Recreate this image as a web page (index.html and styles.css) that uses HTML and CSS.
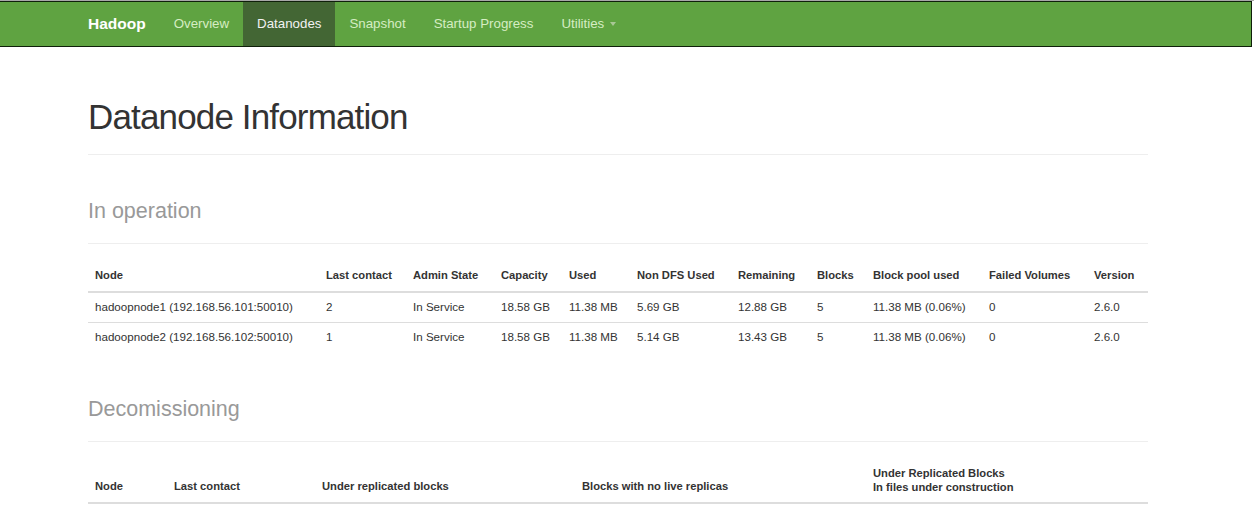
FILE: index.html
```html
<!DOCTYPE html>
<html>
<head>
<meta charset="utf-8">
<title>Datanode Information</title>
<link rel="stylesheet" href="styles.css">
</head>
<body>
<div class="topline"></div>
<nav class="navbar">
  <div class="nav-inner">
    <a class="brand">Hadoop</a>
    <ul class="nav">
      <li><a>Overview</a></li>
      <li class="active"><a>Datanodes</a></li>
      <li><a>Snapshot</a></li>
      <li><a>Startup Progress</a></li>
      <li><a>Utilities <span class="caret"></span></a></li>
    </ul>
  </div>
</nav>
<main class="container">
  <div class="page-header"><h1>Datanode Information</h1></div>

  <div class="section-header"><h2>In operation</h2></div>
  <table class="table">
    <colgroup>
      <col class="c231"><col class="c87"><col class="c88"><col class="c68"><col class="c68"><col class="c101"><col class="c79"><col class="c56"><col class="c116"><col class="c105"><col class="c61">
    </colgroup>
    <thead>
      <tr>
        <th>Node</th><th>Last contact</th><th>Admin State</th><th>Capacity</th><th>Used</th><th>Non DFS Used</th><th>Remaining</th><th>Blocks</th><th>Block pool used</th><th>Failed Volumes</th><th>Version</th>
      </tr>
    </thead>
    <tbody>
      <tr>
        <td>hadoopnode1 (192.168.56.101:50010)</td><td>2</td><td>In Service</td><td>18.58 GB</td><td>11.38 MB</td><td>5.69 GB</td><td>12.88 GB</td><td>5</td><td>11.38 MB (0.06%)</td><td>0</td><td>2.6.0</td>
      </tr>
      <tr>
        <td>hadoopnode2 (192.168.56.102:50010)</td><td>1</td><td>In Service</td><td>18.58 GB</td><td>11.38 MB</td><td>5.14 GB</td><td>13.43 GB</td><td>5</td><td>11.38 MB (0.06%)</td><td>0</td><td>2.6.0</td>
      </tr>
    </tbody>
  </table>

  <div class="section-header second"><h2>Decomissioning</h2></div>
  <table class="table decom">
    <colgroup>
      <col class="c79"><col class="c148"><col class="c260"><col class="c291"><col class="c282">
    </colgroup>
    <thead>
      <tr>
        <th>Node</th><th>Last contact</th><th>Under replicated blocks</th><th>Blocks with no live replicas</th><th class="two-line">Under Replicated Blocks<br>In files under construction</th>
      </tr>
    </thead>
  </table>
</main>
</body>
</html>
```

FILE: styles.css
```css
html, body {
  margin: 0;
  padding: 0;
  background: #ffffff;
}

body {
  font-family: "Liberation Sans", Arial, Helvetica, sans-serif;
  color: #333333;
}

.topline {
  height: 1px;
  background: #a8a8a8;
}

.navbar {
  height: 44px;
  background: #5fa341;
  border-top: 1px solid #0f1f0a;
  border-bottom: 1px solid #0f1f0a;
  border-right: 1px solid #0f1f0a;
  margin-right: 2px;
}

.nav-inner {
  display: flex;
  height: 44px;
  padding-left: 88px;
}

.brand {
  display: block;
  font-size: 15.5px;
  font-weight: bold;
  line-height: 44px;
  color: #ffffff;
  padding-right: 14px;
}

.nav {
  display: flex;
  list-style: none;
  margin: 0;
  padding: 0;
}

.nav a {
  display: block;
  padding: 0 14px;
  line-height: 44px;
  font-size: 13.3px;
  color: #d6edc3;
}

.nav .active a {
  background: #436634;
  color: #f2f2f2;
}

.caret {
  display: inline-block;
  width: 0;
  height: 0;
  margin-left: 2px;
  vertical-align: middle;
  border-top: 4px solid #a9c796;
  border-left: 3.5px solid transparent;
  border-right: 3.5px solid transparent;
}

.container {
  margin-left: 88px;
  width: 1060px;
}

.page-header {
  margin-top: 50px;
  padding-bottom: 17px;
  border-bottom: 1px solid #eeeeee;
}

h1 {
  margin: 0;
  font-size: 35px;
  line-height: 40px;
  font-weight: normal;
  letter-spacing: -0.85px;
  color: #333333;
}

.section-header {
  margin-top: 44px;
  padding-bottom: 20px;
  border-bottom: 1px solid #eeeeee;
}

.section-header.second {
  margin-top: 45px;
}

h2 {
  margin: 0;
  font-size: 21.5px;
  line-height: 24px;
  font-weight: normal;
  color: #999999;
}

.table {
  width: 1060px;
  table-layout: fixed;
  border-collapse: collapse;
  margin-top: 18px;
  font-size: 11.6px;
}

.table.decom {
  margin-top: 19px;
}

.table th,
.table td {
  padding: 6px 7px 8px;
  line-height: 15px;
  text-align: left;
  vertical-align: top;
  white-space: nowrap;
}

.table th {
  font-size: 11.2px;
  font-weight: bold;
  vertical-align: bottom;
  border-bottom: 2px solid #dddddd;
}

.table td {
  border-top: 1px solid #dddddd;
}

.table th.two-line {
  line-height: 13.5px;
}

.c231 { width: 231px; }
.c87 { width: 87px; }
.c88 { width: 88px; }
.c68 { width: 68px; }
.c101 { width: 101px; }
.c79 { width: 79px; }
.c56 { width: 56px; }
.c116 { width: 116px; }
.c105 { width: 105px; }
.c61 { width: 61px; }
.c148 { width: 148px; }
.c260 { width: 260px; }
.c291 { width: 291px; }
.c282 { width: 282px; }
```
